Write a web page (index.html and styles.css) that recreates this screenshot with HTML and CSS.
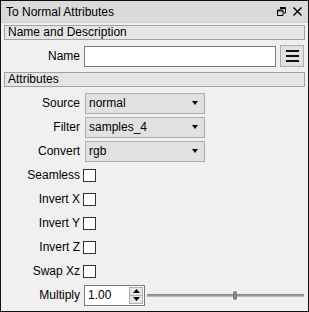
FILE: index.html
```html
<!DOCTYPE html>
<html>
<head>
<meta charset="utf-8">
<link rel="stylesheet" href="styles.css">
</head>
<body>
<div class="window">
  <div class="titlebar">
    <span class="title">To Normal Attributes</span>
    <span class="tb-icons">
      <svg width="9" height="9" viewBox="0 0 9 9"><path d="M3 0.5H8.5V6H6.5M0.5 3H6V8.5H0.5Z M3 1.5H8.5 M0.5 4H6" fill="none" stroke="#000" stroke-width="1"/></svg>
      <svg width="9" height="9" viewBox="0 0 9 9"><path d="M0.5 0.5L8.5 8.5M8.5 0.5L0.5 8.5" stroke="#000" stroke-width="1.4"/></svg>
    </span>
  </div>
  <div class="content">
    <div class="section">Name and Description</div>
    <div class="row name-row">
      <span class="label">Name</span>
      <span class="input"></span>
      <span class="menu-btn"><svg width="13" height="12" viewBox="0 0 13 12"><path d="M0 1H13M0 6H13M0 11H13" stroke="#111" stroke-width="2"/></svg></span>
    </div>
    <div class="section second">Attributes</div>
    <div class="rows">
      <div class="row"><span class="label">Source</span><span class="combo"><span>normal</span><i class="arrow"></i></span></div>
      <div class="row"><span class="label">Filter</span><span class="combo"><span>samples_4</span><i class="arrow"></i></span></div>
      <div class="row"><span class="label">Convert</span><span class="combo"><span>rgb</span><i class="arrow"></i></span></div>
      <div class="row"><span class="label">Seamless</span><span class="check"></span></div>
      <div class="row"><span class="label">Invert X</span><span class="check"></span></div>
      <div class="row"><span class="label">Invert Y</span><span class="check"></span></div>
      <div class="row"><span class="label">Invert Z</span><span class="check"></span></div>
      <div class="row"><span class="label">Swap Xz</span><span class="check"></span></div>
      <div class="row"><span class="label">Multiply</span>
        <span class="spin"><span class="spin-text">1.00</span>
          <span class="spin-btns">
            <span class="sb"><svg width="7" height="4" viewBox="0 0 7 4"><path d="M3.5 0L7 4H0Z" fill="#000"/></svg></span>
            <span class="sb"><svg width="7" height="4" viewBox="0 0 7 4"><path d="M0 0H7L3.5 4Z" fill="#000"/></svg></span>
          </span>
        </span>
        <span class="slider"><span class="track"></span><span class="thumb"></span></span>
      </div>
    </div>
  </div>
</div>
</body>
</html>
```
FILE: styles.css
```css
* { box-sizing: border-box; }
html, body { margin: 0; padding: 0; }
body {
  width: 309px; height: 312px;
  font-family: "Liberation Sans", Arial, sans-serif;
  font-size: 11px;
  color: #000;
  background: #f0f0f0;
}
.window {
  width: 309px; height: 312px;
  border: 1px solid #111;
  background: #f0f0f0;
  display: flex; flex-direction: column;
}
.titlebar {
  height: 22px;
  background: #dadada;
  display: flex; align-items: center; justify-content: space-between;
  padding: 0 6px 0 5px;
  font-size: 12px;
  border-bottom: 1px solid #cfcfcf;
}
.title { padding-top: 1px; }
.tb-icons { display: flex; gap: 7px; align-items: center; }
.content { padding: 2px 3px 0 3px; display: flex; flex-direction: column; }
.section {
  height: 15px;
  border: 1px solid #a0a0a0;
  background: #e5e5e5;
  padding-left: 3px;
  line-height: 13px;
  font-size: 12px;
}
.section.second { margin-top: 5px; }
.row {
  display: flex; align-items: center;
  height: 22px;
}
.name-row { margin-top: 5px; height: 22px; }
.label {
  width: 78px; text-align: right; padding-right: 2px;
  font-size: 12px;
  flex: none;
}
.input {
  width: 192px; height: 21px;
  background: #fff;
  border: 1px solid #7a7a7a;
  margin-left: 2px;
}
.menu-btn {
  width: 24px; height: 22px;
  margin-left: 4px;
  background: #e1e1e1;
  border: 1px solid #adadad;
  display: flex; align-items: center; justify-content: center;
}
.rows { margin-top: 5px; display: flex; flex-direction: column; gap: 2px; }
.combo {
  width: 120px; height: 21px;
  margin-left: 3px;
  background: #e1e1e1;
  border: 1px solid #adadad;
  display: flex; align-items: center; justify-content: space-between;
  padding: 0 6px 0 3px;
  font-size: 12px;
}
.arrow {
  width: 0; height: 0;
  border-left: 3.5px solid transparent;
  border-right: 3.5px solid transparent;
  border-top: 4px solid #000;
}
.check {
  width: 13px; height: 13px;
  margin-left: 1px;
  background: #fff;
  border: 1px solid #333;
}
.spin {
  width: 61px; height: 21px;
  margin-left: 2px;
  background: #fff;
  border: 1px solid #7a7a7a;
  display: flex; align-items: stretch;
  font-size: 12px;
}
.spin-text { flex: 1; padding-left: 3px; display: flex; align-items: center; }
.spin-btns { width: 15px; display: flex; flex-direction: column; padding: 1px 1px 1px 0; gap: 0; }
.sb {
  flex: 1;
  background: #e6e6e6;
  border: 1px solid #b0b0b0;
  display: flex; align-items: center; justify-content: center;
}
.sb + .sb { border-top: none; }
.slider {
  flex: 1; height: 14px;
  margin-left: 2px; margin-right: 0;
  position: relative;
}
.track {
  position: absolute; left: 0; right: 1px; top: 6px;
  height: 3px;
  background: #9a9a9a;
  border-top: 1px solid #8a8a8a;
  border-bottom: 1px solid #b8b8b8;
}
.thumb {
  position: absolute; left: 86px; top: 3px;
  width: 4px; height: 9px;
  background: #8a8a8a;
  border: 1px solid #7a7a7a;
  border-radius: 2px;
}
```
